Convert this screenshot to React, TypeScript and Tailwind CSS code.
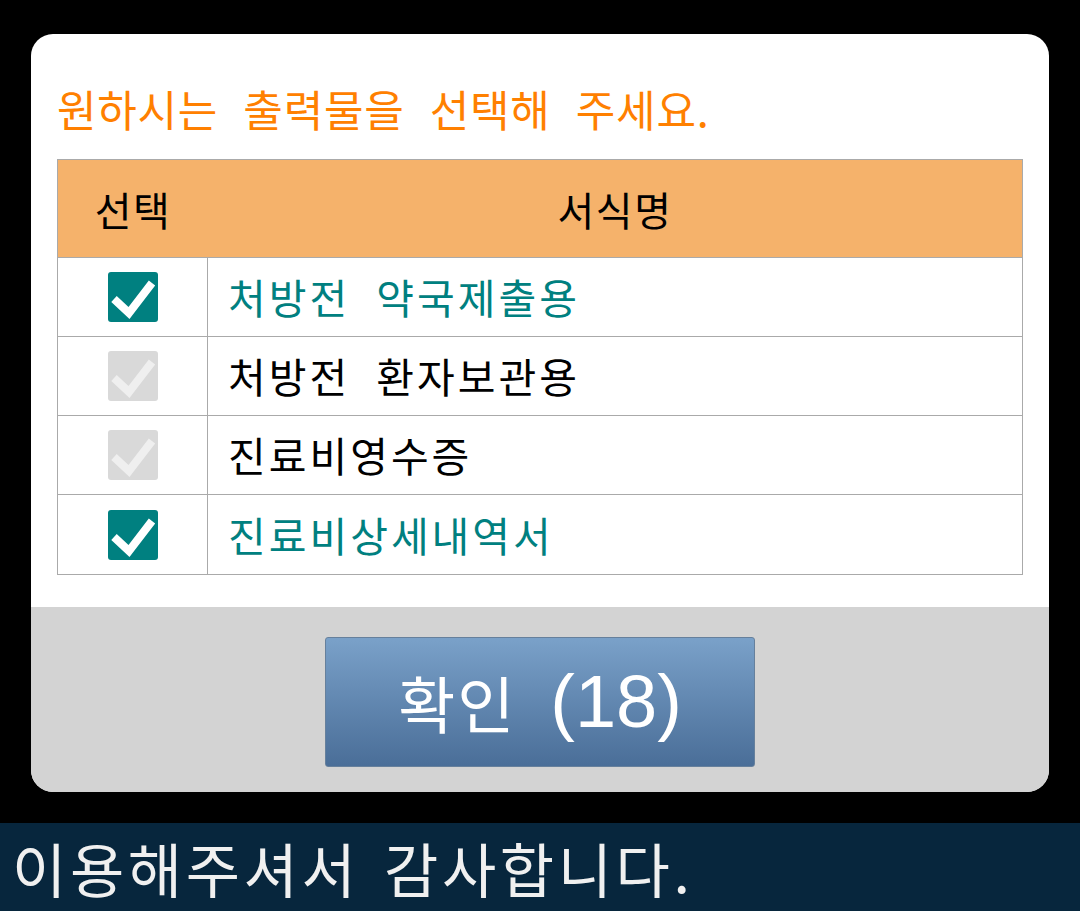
import { useState } from 'react'

const rows = [
    { name: '처방전 약국제출용', checked: true },
    { name: '처방전 환자보관용', checked: false },
    { name: '진료비영수증', checked: false },
    { name: '진료비상세내역서', checked: true },
]

function CheckBox({ checked }: { checked: boolean }) {
    return (
        <div
            className={`flex h-[50px] w-[50px] items-center justify-center rounded-[3px] ${
                checked ? 'bg-[#008080]' : 'bg-[#d9d9d9]'
            }`}
        >
            <svg viewBox="0 0 50 50" className="h-[50px] w-[50px]">
                <polyline
                    points="6,27 21,41 44,11"
                    fill="none"
                    stroke={checked ? '#ffffff' : '#efefef'}
                    strokeWidth="8"
                    strokeLinejoin="miter"
                />
            </svg>
        </div>
    )
}

export default function App() {
    const [items] = useState(rows)
    const count = 18

    return (
        <div className="flex h-[911px] w-[1080px] flex-col bg-black font-['Noto_Sans_CJK_KR',sans-serif]">
            <div className="mx-[31px] mt-[34px] flex h-[758px] flex-col overflow-hidden rounded-[22px] bg-white">
                <div className="flex flex-col px-[26px]">
                    <h1 className="mt-[50px] text-[43px] leading-[48px] tracking-[0.7px] text-[#ff8000] [word-spacing:15px]">
                        원하시는 출력물을 선택해 주세요.
                    </h1>
                    <div className="mt-[27px] border border-[#aaaaaa]">
                        <div className="flex h-[98px] items-center border-b border-[#aaaaaa] bg-[#f5b26b] text-[40px] tracking-[1.5px] text-black">
                            <div className="w-[150px] text-center">선택</div>
                            <div className="flex-1 text-center">서식명</div>
                        </div>
                        {items.map((row, i) => (
                            <div
                                key={row.name}
                                className={`flex h-[79px] ${i < items.length - 1 ? 'border-b border-[#aaaaaa]' : ''}`}
                            >
                                <div className="flex w-[150px] items-center justify-center border-r border-[#aaaaaa]">
                                    <CheckBox checked={row.checked} />
                                </div>
                                <div
                                    className={`flex flex-1 items-center pl-[20px] text-[41px] tracking-[3px] [word-spacing:14px] ${
                                        row.checked ? 'text-[#008080]' : 'text-black'
                                    }`}
                                >
                                    {row.name}
                                </div>
                            </div>
                        ))}
                    </div>
                </div>
                <div className="mt-auto flex h-[185px] items-start justify-center bg-[#d3d3d3] pt-[30px]">
                    <button className="flex h-[130px] w-[430px] items-center justify-center rounded-[3px] border border-[#66809c] bg-gradient-to-b from-[#7aa1c9] to-[#4a6e98] text-white">
                        <span className="text-[62px] leading-none tracking-[2px]">확인</span>
                        <span className="ml-[34px] font-['Liberation_Sans',sans-serif] text-[74px] leading-none">
                            ({count})
                        </span>
                    </button>
                </div>
            </div>
            <div className="mt-auto flex h-[88px] items-center bg-[#07263d] pl-[12px]">
                <span className="text-[59px] leading-none tracking-[3.6px] text-[#f0f0f0] [word-spacing:8px]">
                    이용해주셔서 감사합니다.
                </span>
            </div>
        </div>
    )
}
